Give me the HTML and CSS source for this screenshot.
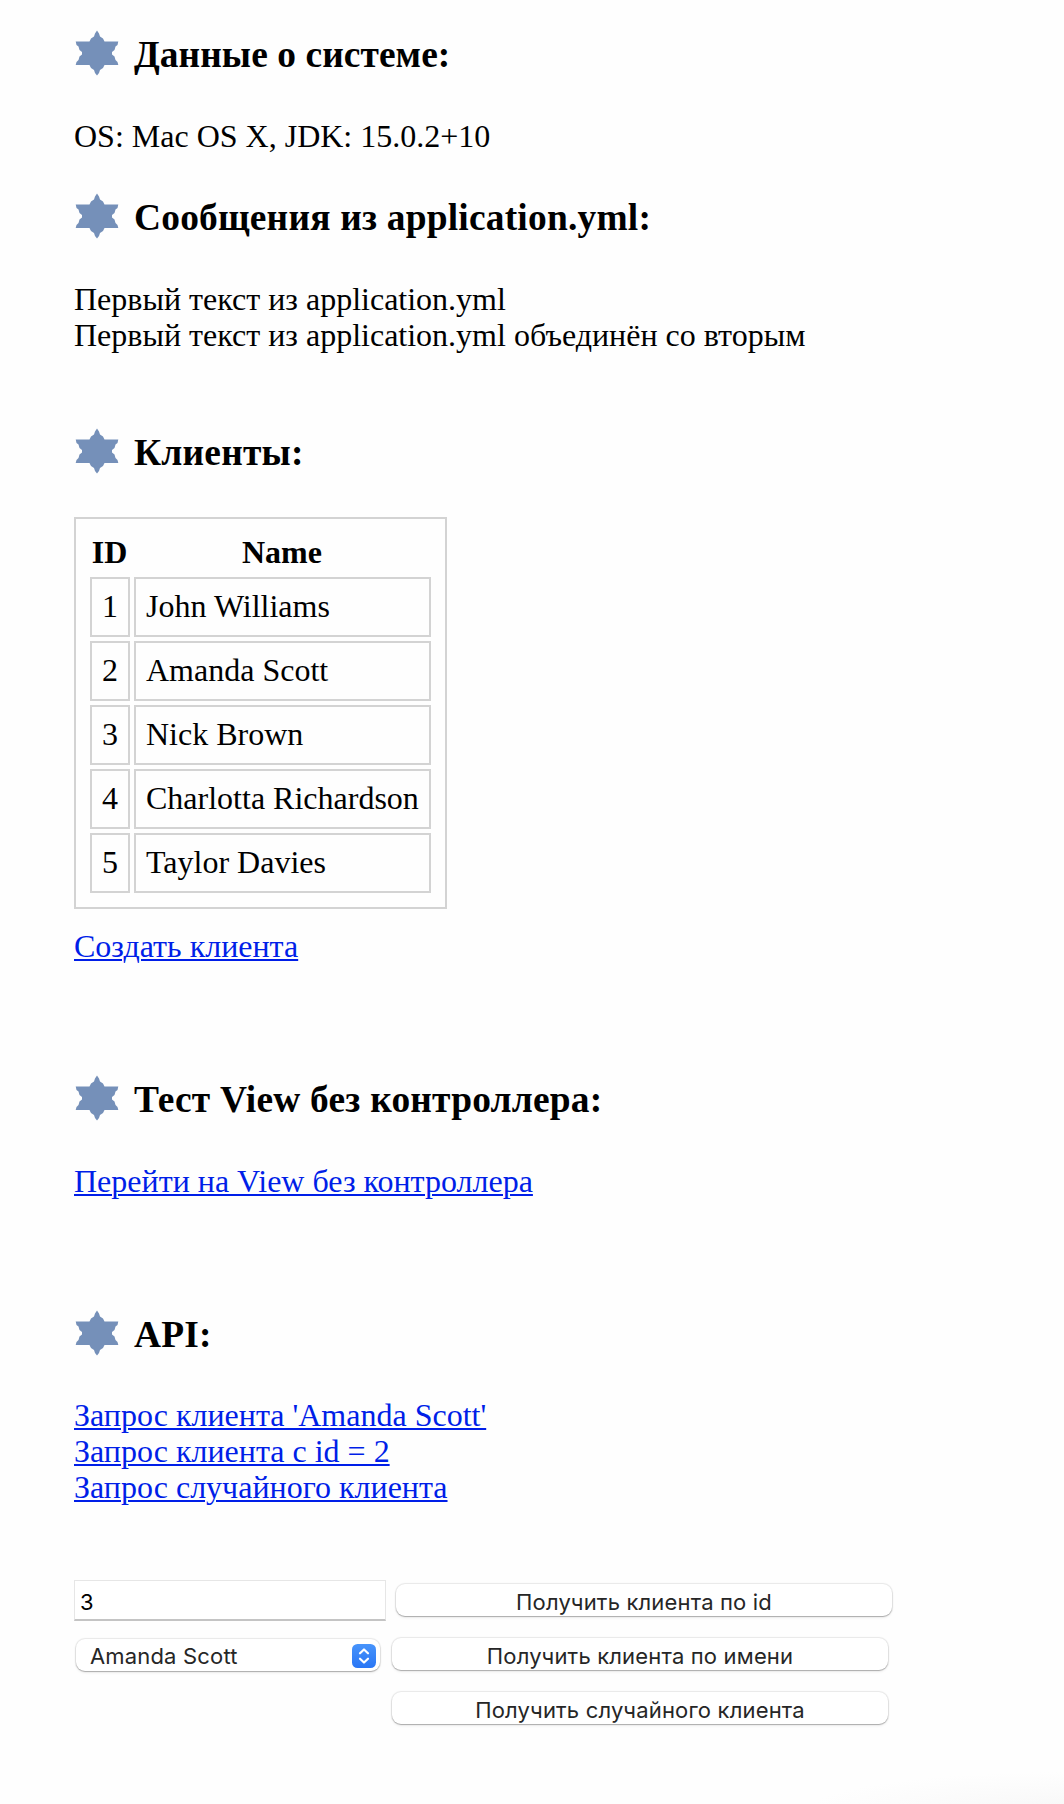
FILE: index.html
```html
<!DOCTYPE html>
<html lang="ru">
<head>
<meta charset="utf-8">
<title>Клиенты</title>
<link rel="stylesheet" href="styles.css">
</head>
<body>
<svg class="defs" width="0" height="0" aria-hidden="true">
  <symbol id="star" viewBox="0 0 44 44">
    <path d="M22 -0.500 L24 2.500 L25 5.500 L28 7.500 L29.500 10.500 L43.300 10.500 L42.500 14 L40.500 15.500 L39.500 19 L37 21 L37 23.500 L39.500 25.500 L40.500 29 L42.500 31 L43.300 34 L29.500 34 L28 37 L25 39 L24 42 L22 44.500 L20 42 L19 39 L16 37 L14.500 34 L0.700 34 L1.500 31 L3.500 29 L4.500 25.500 L7 23.500 L7 21 L4.500 19 L3.500 15.500 L1.500 14 L0.700 10.500 L14.500 10.500 L16 7.500 L19 5.500 L20 2.500 Z"/>
  </symbol>
</svg>
<main class="page">
  <section class="section system">
    <h3 class="heading"><svg class="star"><use href="#star"/></svg><span>Данные о системе:</span></h3>
    <p class="text">OS: Mac OS X, JDK: 15.0.2+10</p>
  </section>
  <section class="section messages">
    <h3 class="heading"><svg class="star"><use href="#star"/></svg><span>Сообщения из application.yml:</span></h3>
    <p class="text">Первый текст из application.yml<br>Первый текст из application.yml объединён со вторым</p>
  </section>
  <section class="section clients">
    <h3 class="heading"><svg class="star"><use href="#star"/></svg><span>Клиенты:</span></h3>
    <table class="table">
      <thead><tr><th>ID</th><th>Name</th></tr></thead>
      <tbody>
        <tr><td>1</td><td>John Williams</td></tr>
        <tr><td>2</td><td>Amanda Scott</td></tr>
        <tr><td>3</td><td>Nick Brown</td></tr>
        <tr><td>4</td><td>Charlotta Richardson</td></tr>
        <tr><td>5</td><td>Taylor Davies</td></tr>
      </tbody>
    </table>
    <p class="text"><a class="link" href="#">Создать клиента</a></p>
  </section>
  <section class="section view">
    <h3 class="heading"><svg class="star"><use href="#star"/></svg><span>Тест View без контроллера:</span></h3>
    <p class="text"><a class="link" href="#">Перейти на View без контроллера</a></p>
  </section>
  <section class="section api">
    <h3 class="heading"><svg class="star"><use href="#star"/></svg><span>API:</span></h3>
    <p class="text"><a class="link" href="#">Запрос клиента 'Amanda Scott'</a><br><a class="link" href="#">Запрос клиента с id = 2</a><br><a class="link" href="#">Запрос случайного клиента</a></p>
  </section>
  <div class="forms">
    <form class="row row-id">
      <input class="input" type="text" value="3">
      <button class="button by-id" type="button">Получить клиента по id</button>
    </form>
    <form class="row row-name">
      <div class="select-box">
        <select class="select"><option>Amanda Scott</option></select>
        <svg class="arrows" viewBox="0 0 24 24">
          <defs><linearGradient id="blue" x1="0" y1="0" x2="0" y2="1"><stop offset="0" stop-color="#4794fb"/><stop offset="1" stop-color="#2a76f5"/></linearGradient></defs>
          <rect width="24" height="24" rx="5.500" fill="url(#blue)"/>
          <path d="M8 9.300 L12 5.500 L16 9.300 M8 14.700 L12 18.500 L16 14.700" fill="none" stroke="#fff" stroke-width="2.200" stroke-linecap="round" stroke-linejoin="round"/>
        </svg>
      </div>
      <button class="button by-name" type="button">Получить клиента по имени</button>
    </form>
    <form class="row row-random">
      <button class="button random" type="button">Получить случайного клиента</button>
    </form>
  </div>
</main>
</body>
</html>
```
FILE: styles.css
```css
* { box-sizing: border-box; }

body {
  margin: 0;
  min-height: 1804px;
  background: radial-gradient(ellipse 260px 40px at 1064px 1812px, #f7f7f7, #fefefe) #fefefe;
  color: #000;
  font: 32px/36px "Liberation Serif", "Times New Roman", serif;
}

.defs { display: block; }

.page { padding: 31px 74px 0; }

.heading {
  display: flex;
  align-items: center;
  gap: 14px;
  height: 44px;
  margin: 0 0 43px;
  font-size: 37.44px;
  line-height: 44px;
  letter-spacing: 0.21px;
  white-space: nowrap;
}

.system .heading { letter-spacing: 0.07px; }

.heading span { padding-top: 3px; }

.star {
  flex: none;
  width: 44px;
  height: 44px;
  margin: 0 1px;
  overflow: visible;
  fill: #7590b9;
}

#star { overflow: visible; }

.text { margin: 0; }

.system { margin-bottom: 40px; }
.messages { margin-bottom: 76px; }
.clients,
.view { margin-bottom: 112px; }
.api { margin-bottom: 75px; }

.link {
  color: #001ee8;
  text-decoration: underline;
  text-decoration-thickness: 2px;
  text-underline-offset: 2px;
}

.clients .heading { margin-bottom: 44px; }
.api .heading { margin-bottom: 42px; }

.table {
  margin-bottom: 19px;
  padding: 10px;
  border: 2px solid #d3d3d3;
  border-spacing: 4px;
}

.table th { padding: 1px 2px 3px 1px; }

.table td {
  padding: 9px 10px 11px;
  border: 2px solid #d3d3d3;
}

.forms {
  color: #262626;
  font-family: Inter, sans-serif;
  font-size: 22px;
}

.row {
  display: flex;
  align-items: flex-start;
}

.input {
  width: 312px;
  height: 41px;
  padding: 3px 5px 0;
  border: 1px solid #e6e6e6;
  border-bottom: 2px solid #c4c4c4;
  background: #fff;
  color: #000;
  font: 22px "Inter", sans-serif;
  outline: none;
}

.button,
.select {
  appearance: none;
  height: 32px;
  border: 0;
  border-radius: 9px;
  background: #fff;
  box-shadow: 0 0 1px 1px rgba(0, 0, 0, 0.09), 0 1px 1px rgba(0, 0, 0, 0.22), 0 2px 3px rgba(0, 0, 0, 0.06);
  color: #262626;
  font: 22px/32px "Inter", sans-serif;
  letter-spacing: 0.17px;
}

.button {
  width: 496px;
  padding: 2px 0 0;
}

.by-id { margin: 4px 0 0 10px; }

.select-box {
  position: relative;
  width: 304px;
  margin: 1px 12px 0 2px;
}

.select {
  display: block;
  width: 304px;
  padding: 1px 14px 0;
}

.arrows {
  position: absolute;
  top: 5px;
  right: 4px;
  width: 24px;
  height: 24px;
}

.row-name { margin-top: 17px; }

.row-random {
  margin-top: 21px;
  padding-left: 318px;
}
```
